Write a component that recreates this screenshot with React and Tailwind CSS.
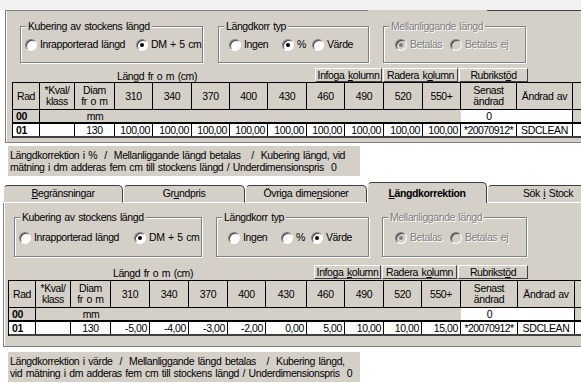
import React from "react";

const GRAY = "bg-[#d4d0c8]";
const OFF_TXT = "text-[#808080] [text-shadow:1px_1px_0_#fff]";

const COLS1 = ["w-[27px]", "w-[35px]", "w-[40px]", "w-[38px]", "w-[39px]", "w-[38px]", "w-[38px]", "w-[39px]", "w-[38px]", "w-[39px]", "w-[39px]", "w-[38px]", "w-[56px]", "w-[56px]"];
const COLS2 = ["w-[27px]", "w-[35px]", "w-[40px]", "w-[39px]", "w-[39px]", "w-[39px]", "w-[38px]", "w-[41px]", "w-[38px]", "w-[39px]", "w-[38px]", "w-[39px]", "w-[57px]", "w-[57px]"];

const HEAD = ["Rad", "*Kval/\nklass", "Diam\nfr o m", "310", "340", "370", "400", "430", "460", "490", "520", "550+", "Senast\nändrad", "Ändrad av"];

function Radio({ on, off }) {
  return (
    <span
      className={`flex w-[12px] h-[12px] shrink-0 items-center justify-center rounded-full border border-t-[#808080] border-l-[#808080] border-r-white border-b-white shadow-[inset_1px_1px_0_#404040] ${off ? GRAY : "bg-white"}`}
    >
      {on && <span className={`w-[4px] h-[4px] rounded-full ${off ? "bg-[#808080]" : "bg-black"}`} />}
    </span>
  );
}

function Opt({ label, on, off, w }) {
  return (
    <div className={`flex items-center gap-[3px] ${w || ""}`}>
      <Radio on={on} off={off} />
      <span className={`whitespace-nowrap ${off ? OFF_TXT : ""}`}>{label}</span>
    </div>
  );
}

function Group({ title, box, off, children }) {
  return (
    <div className={`relative flex items-center pt-[1px] border border-[#808080] shadow-[inset_1px_1px_0_#fff,1px_1px_0_#fff] ${box}`}>
      <span className={`absolute -top-[7px] left-[5px] ${GRAY} px-[2px] leading-[12px] whitespace-nowrap ${off ? OFF_TXT : ""}`}>
        {title}
      </span>
      {children}
    </div>
  );
}

function Btn({ w, children }) {
  return (
    <div className={`${w} h-[14px] flex items-center justify-center ${GRAY} border-t border-l border-t-white border-l-white border-r border-b border-r-[#404040] border-b-[#404040] leading-[12px] whitespace-pre`}>
      {children}
    </div>
  );
}

function Table({ cols, values, cls }) {
  return (
    <div className={`flex flex-col border-l border-t border-black ${cls}`}>
      {/* header */}
      <div className="flex h-[27px] border-b border-black">
        {HEAD.map((h, i) => (
          <div key={i} className={`${cols[i]} shrink-0 flex items-center justify-center text-center border-r border-black leading-[11px] whitespace-pre-line ${GRAY}`}>
            {h}
          </div>
        ))}
      </div>
      {/* row 00 */}
      <div className={`flex h-[14px] border-b-2 border-black ${GRAY}`}>
        <div className={`${cols[0]} shrink-0 border-r border-black font-bold pl-[3px] leading-[12px]`}>00</div>
        <div className={`${cols[1]} shrink-0`} />
        <div className={`${cols[2]} shrink-0 text-center leading-[12px]`}>mm</div>
        {cols.slice(3, 12).map((c, i) => (
          <div key={i} className={`${c} shrink-0`} />
        ))}
        <div className={`${cols[12]} shrink-0 bg-white text-center leading-[12px]`}>0</div>
        <div className={`${cols[13]} shrink-0 bg-white border-r border-black`} />
      </div>
      {/* row 01 */}
      <div className="flex h-[14px] border-b-2 border-[#404040] bg-white">
        <div className={`${cols[0]} shrink-0 border-r border-black font-bold pl-[3px] leading-[12px]`}>01</div>
        <div className={`${cols[1]} shrink-0 border-r border-black`} />
        <div className={`${cols[2]} shrink-0 border-r border-black text-center leading-[12px]`}>130</div>
        {values.map((v, i) => (
          <div key={i} className={`${cols[i + 3]} shrink-0 border-r border-black text-right pr-[2px] leading-[12px]`}>
            {v}
          </div>
        ))}
        <div className={`${cols[12]} shrink-0 border-r border-black text-center leading-[12px] tracking-[-0.6px]`}>*20070912*</div>
        <div className={`${cols[13]} shrink-0 border-r border-black text-center leading-[12px]`}>SDCLEAN</div>
      </div>
    </div>
  );
}

function Tab({ w, sel, children }) {
  if (sel) {
    return (
      <div className={`${w} shrink-0 h-[21px] pt-[2px] flex items-center justify-center font-bold ${GRAY} border-t border-l border-r border-t-[#404040] border-l-white border-r-[#404040] rounded-t-[5px] whitespace-pre`}>
        {children}
      </div>
    );
  }
  return (
    <div className={`${w} shrink-0 h-[18px] flex items-center justify-center ${GRAY} border-t border-l border-r border-b border-t-[#404040] border-l-white border-r-[#404040] border-b-white rounded-t-[5px] whitespace-pre`}>
      {children}
    </div>
  );
}

function Note({ children }) {
  return (
    <div className={`ml-[8px] w-[352px] ${GRAY} px-[2px] py-[3px] leading-[12px] whitespace-pre`}>
      {children}
    </div>
  );
}

export default function App() {
  const v1 = Array(9).fill("100,00");
  const v2 = ["-5,00", "-4,00", "-3,00", "-2,00", "0,00", "5,00", "10,00", "10,00", "15,00"];

  return (
    <div className="w-[581px] h-[383px] overflow-hidden bg-white font-['Liberation_Sans',Arial,sans-serif] text-[10.5px] tracking-[-0.4px] [word-spacing:1px] text-black">
      {/* section 1: % */}
      <div className="h-[10px] bg-[#f2f2f2]" />
      <div className="flex h-px">
        <div className="ml-[5px] w-[363px] bg-[#808080]" />
        <div className={`w-[119px] ${GRAY}`} />
        <div className="flex-1 bg-[#404040]" />
      </div>
      <div className={`ml-[5px] h-[132px] ${GRAY} border-l border-b border-[#808080] shadow-[inset_1px_0_0_#fff] flex flex-col`}>
        <div className="flex mt-[15px]">
          <Group title="Kubering av stockens längd" box="ml-[14px] w-[183px] h-[37px] pl-[4px]">
            <Opt label="Inrapporterad längd" w="w-[111px]" />
            <Opt label="DM + 5 cm" on />
          </Group>
          <Group title="Längdkorr typ" box="ml-[15px] w-[151px] h-[37px] pl-[10px]">
            <Opt label="Ingen" w="w-[53px]" />
            <Opt label="%" on w="w-[30px]" />
            <Opt label="Värde" />
          </Group>
          <Group title="Mellanliggande längd" off box="ml-[14px] w-[143px] h-[37px] pl-[11px]">
            <Opt label="Betalas" on off w="w-[55px]" />
            <Opt label="Betalas ej" off />
          </Group>
        </div>
        <div className="flex items-end mt-[5px] h-[14px]">
          <div className="w-[302px] text-center leading-[12px]">Längd fr o m (cm)</div>
          <div className="ml-[7px] flex gap-[1px]">
            <Btn w="w-[67px]">{"Infoga "}<u>k</u>olumn</Btn>
            <Btn w="w-[75px]">Radera k<u>o</u>lumn</Btn>
            <Btn w="w-[69px]">Rubrikst<u>ö</u>d</Btn>
          </div>
        </div>
        <Table cols={COLS1} values={v1} cls="ml-[6px]" />
      </div>
      <div className="mt-[3px]">
        <Note>
          {"Längdkorrektion i %  /  Mellanliggande längd betalas   /  Kubering längd, vid\nmätning i dm adderas fem cm till stockens längd / Underdimensionspris  0"}
        </Note>
      </div>

      {/* section 2: värde */}
      <div className="mt-[6px] ml-[3px] flex items-end h-[21px]">
        <Tab w="w-[120px]"><u>B</u>egränsningar</Tab>
        <Tab w="w-[122px]">Gr<u>u</u>ndpris</Tab>
        <Tab w="w-[122px]">Övriga dime<u>n</u>sioner</Tab>
        <Tab w="w-[120px]" sel><u>L</u>ängdkorrektion</Tab>
        <Tab w="w-[122px]">{"Sök "}<u>i</u>{" Stock"}</Tab>
      </div>
      <div className={`ml-[3px] h-[144px] ${GRAY} border-l border-b border-[#808080] shadow-[inset_1px_0_0_#fff] flex flex-col`}>
        <div className="flex mt-[14px]">
          <Group title="Kubering av stockens längd" box="ml-[10px] w-[188px] h-[40px] pl-[4px]">
            <Opt label="Inrapporterad längd" w="w-[115px]" />
            <Opt label="DM + 5 cm" on />
          </Group>
          <Group title="Längdkorr typ" box="ml-[14px] w-[153px] h-[40px] pl-[11px]">
            <Opt label="Ingen" w="w-[53px]" />
            <Opt label="%" w="w-[30px]" />
            <Opt label="Värde" on />
          </Group>
          <Group title="Mellanliggande längd" off box="ml-[13px] w-[145px] h-[40px] pl-[12px]">
            <Opt label="Betalas" on off w="w-[55px]" />
            <Opt label="Betalas ej" off />
          </Group>
        </div>
        <div className="flex items-end mt-[8px] h-[14px]">
          <div className="w-[298px] text-center leading-[12px]">Längd fr o m (cm)</div>
          <div className="ml-[12px] flex gap-[1px]">
            <Btn w="w-[67px]">{"Infoga "}<u>k</u>olumn</Btn>
            <Btn w="w-[75px]">Radera k<u>o</u>lumn</Btn>
            <Btn w="w-[70px]">Rubrikst<u>ö</u>d</Btn>
          </div>
        </div>
        <Table cols={COLS2} values={v2} cls="ml-[4px] mt-[1px]" />
      </div>
      <div className="mt-[5px]">
        <Note>
          {"Längdkorrektion i värde  /  Mellanliggande längd betalas   /  Kubering längd,\nvid mätning i dm adderas fem cm till stockens längd / Underdimensionspris  0"}
        </Note>
      </div>
    </div>
  );
}
